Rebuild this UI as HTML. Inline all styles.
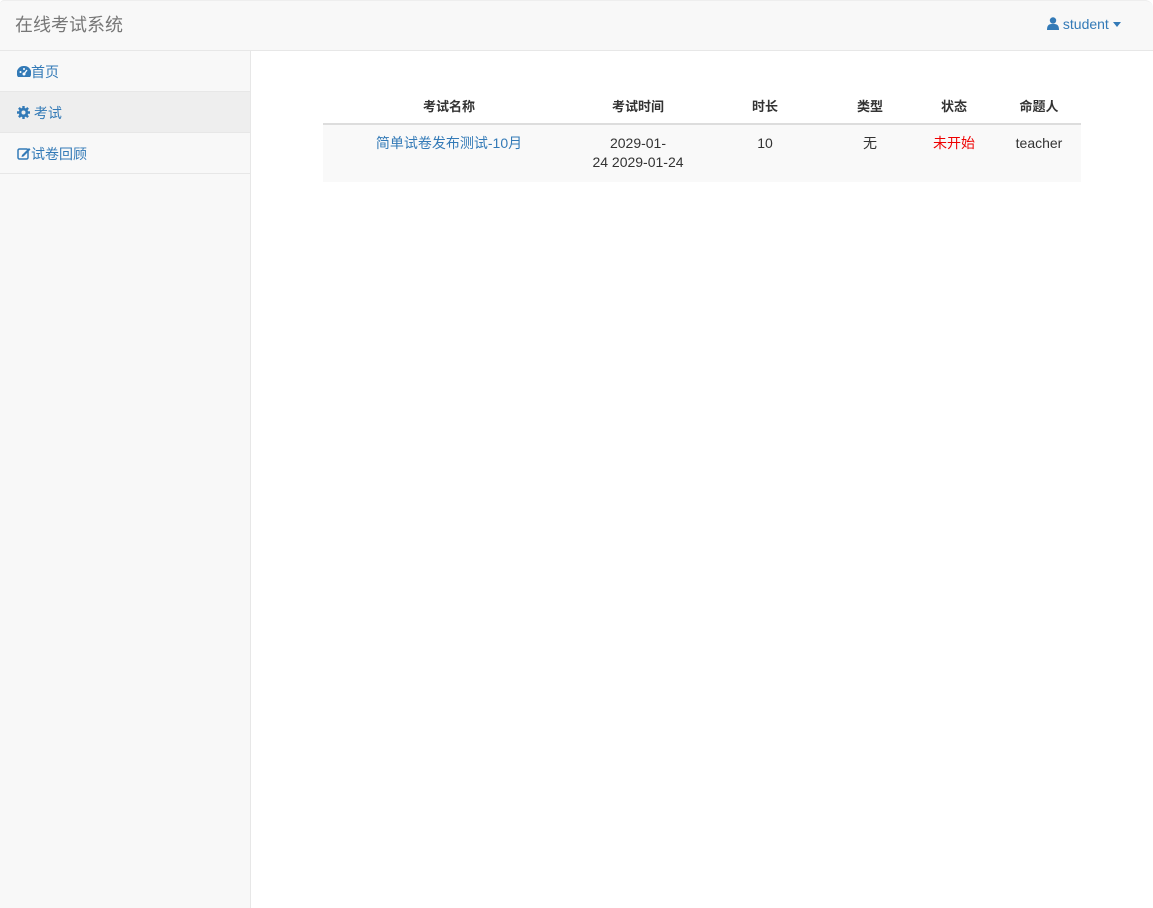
<!DOCTYPE html>
<html><head><meta charset="utf-8"><style>
*{box-sizing:border-box}
body{margin:0;width:1153px;height:908px;background:#fff;font-family:"Liberation Sans","Noto Sans CJK SC",sans-serif;font-size:14px;color:#333;position:relative;overflow:hidden}
.nav{position:absolute;left:0;top:0;width:1153px;height:51px;background:#f8f8f8;border-bottom:1px solid #e7e7e7;border-top:1px solid #eee;border-radius:4px 8px 0 0}
.brand{position:absolute;left:15px;top:10px;font-size:18px;color:#777}
.user{position:absolute;left:1047px;top:15px;color:#337ab7;font-size:14px}
.side{position:absolute;left:0;top:51px;width:251px;height:857px;background:#f8f8f8;border-right:1px solid #e7e7e7}
.side div{height:41px;border-bottom:1px solid #e7e7e7;color:#337ab7;padding:11px 0 0 17px;font-size:14px}
.side .act{background:#eee}
table{position:absolute;left:323px;top:87px;width:758px;border-collapse:collapse}
th{font-weight:bold;height:37px;border-bottom:2px solid #ddd;text-align:center;font-size:13px;padding:0}
td{background:#f9f9f9;text-align:center;vertical-align:top;padding:9px 0 10px;line-height:19px;font-size:14px}
</style></head><body>
<div class="nav"><div class="brand">在线考试系统</div>
<div class="user"><svg width="12" height="13" viewBox="0 0 12 13" style="vertical-align:-1px"><circle cx="6" cy="3.5" r="3.2" fill="#337ab7"/><path d="M0 13 C0 7 3 7 6 7 C9 7 12 7 12 13Z" fill="#337ab7"/></svg> student <svg width="8" height="5" viewBox="0 0 8 5" style="vertical-align:2px"><path d="M0 0H8L4 5Z" fill="#337ab7"/></svg></div></div>
<div class="side">
<div><svg width="14" height="12" viewBox="0 0 14 12" style="vertical-align:-1px"><path d="M7 0A7 7 0 0 0 1 11H13A7 7 0 0 0 7 0Z" fill="#337ab7"/><circle cx="7" cy="8" r="1.5" fill="#fff"/><path d="M7 8L10 4" stroke="#fff" stroke-width="1.3"/><circle cx="3.5" cy="6" r="1" fill="#fff"/><circle cx="7" cy="3" r="1" fill="#fff"/></svg>首页</div>
<div class="act"><svg width="13" height="13" viewBox="0 0 13 13" style="vertical-align:-1px"><circle cx="6.5" cy="6.5" r="4.8" fill="#337ab7"/><g stroke="#337ab7" stroke-width="2.4"><path d="M6.5 0V13M0 6.5H13M1.9 1.9L11.1 11.1M11.1 1.9L1.9 11.1"/></g><circle cx="6.5" cy="6.5" r="2" fill="#eee"/></svg> 考试</div>
<div><svg width="14" height="13" viewBox="0 0 14 13" style="vertical-align:-1px"><rect x="1" y="2" width="10" height="10" rx="1.5" fill="none" stroke="#337ab7" stroke-width="1.5"/><path d="M5 8L12 1L13.5 2.5L6.5 9.5L4.5 10Z" fill="#337ab7"/></svg>试卷回顾</div>
</div>
<table>
<tr><th style="width:252px">考试名称</th><th style="width:126px">考试时间</th><th style="width:128px">时长</th><th style="width:82px">类型</th><th style="width:86px">状态</th><th>命题人</th></tr>
<tr><td style="color:#337ab7">简单试卷发布测试-10月</td><td>2029-01-<br>24 2029-01-24</td><td>10</td><td>无</td><td style="color:#e00">未开始</td><td>teacher</td></tr>
</table>
</body></html>
